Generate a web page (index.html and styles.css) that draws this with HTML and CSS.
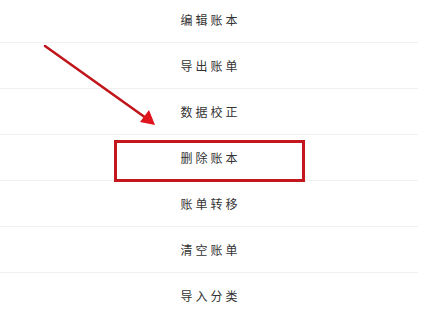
FILE: index.html
```html
<!DOCTYPE html>
<html lang="zh">
<head>
<meta charset="utf-8">
<link rel="stylesheet" href="styles.css">
</head>
<body>
<div class="page">
  <ul class="menu">
    <li class="item">编辑账本</li>
    <li class="item">导出账单</li>
    <li class="item">数据校正</li>
    <li class="item">删除账本</li>
    <li class="item">账单转移</li>
    <li class="item">清空账单</li>
    <li class="item">导入分类</li>
  </ul>
  <div class="highlight"></div>
  <svg class="arrow" width="427" height="316" viewBox="0 0 427 316">
    <line x1="45" y1="46" x2="146" y2="118" stroke="#c0161c" stroke-width="2.6" stroke-linecap="round"/>
    <polygon points="155,125 140,122 149,110" fill="#e0141c"/>
  </svg>
</div>
</body>
</html>
```
FILE: styles.css
```css
html, body {
  margin: 0;
  padding: 0;
  background: #ffffff;
}
.page {
  position: relative;
  width: 427px;
  height: 316px;
  overflow: hidden;
}
.menu {
  list-style: none;
  margin: -3px 0 0 0;
  padding: 0;
  width: 418px;
}
.item {
  height: 45px;
  border-bottom: 1px solid #f0f0f0;
  display: flex;
  align-items: center;
  justify-content: center;
  font-family: "Noto Sans CJK SC", "Noto Sans", sans-serif;
  font-size: 12px;
  letter-spacing: 3px;
  padding-left: 3px;
  color: #333333;
  box-sizing: content-box;
}
.highlight {
  position: absolute;
  left: 114px;
  top: 140px;
  width: 191px;
  height: 42px;
  border: 3px solid #c4161d;
  box-sizing: border-box;
}
.arrow {
  position: absolute;
  left: 0;
  top: 0;
}
```
